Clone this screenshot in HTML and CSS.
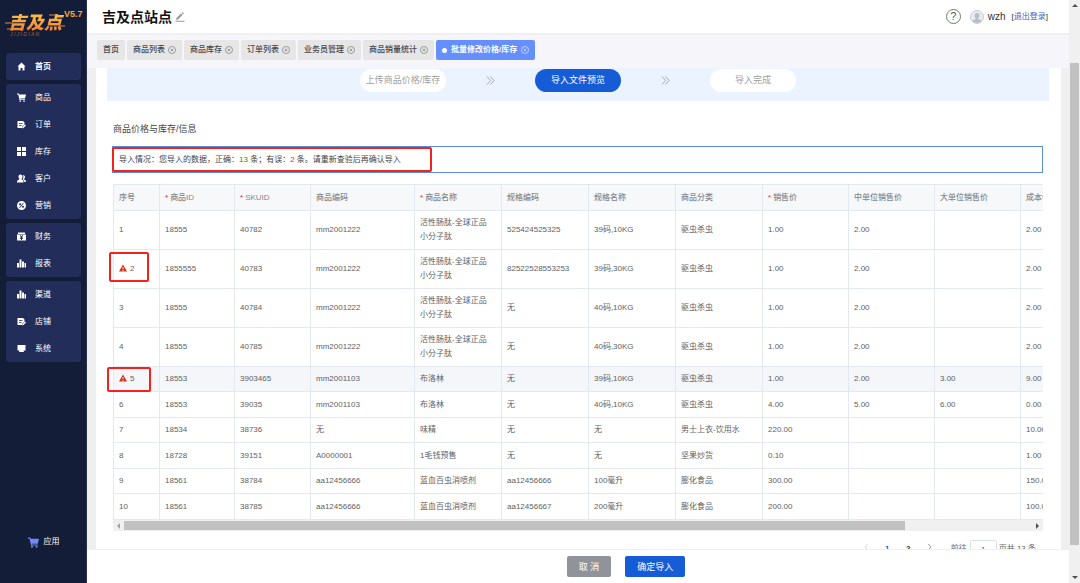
FILE: index.html
```html
<!DOCTYPE html>
<html lang="zh-CN">
<head>
  <meta charset="UTF-8"/>
  <meta name="viewport" content="width=device-width, initial-scale=1.0"/>
  <title>批量修改价格/库存</title>
  <link rel="stylesheet" href="styles.css">
</head>
<body>
<!-- shared icons -->
<svg class="sprite" aria-hidden="true">
  <symbol id="i-home" viewBox="0 0 18 18"><path d="M9 1 1 9h2v8h4v-5h4v5h4V9h2z"/></symbol>
  <symbol id="i-cart" viewBox="0 0 18 18"><path d="M0 1h3.600l.8 2H18l-2 8H6.200l.3 1.400H16V14H5L2.500 3H0z"/><circle cx="6.500" cy="16" r="1.700"/><circle cx="14" cy="16" r="1.700"/></symbol>
  <symbol id="i-order" viewBox="0 0 18 18"><path fill-rule="evenodd" d="M1 2h11l3 3v4l-5 5v2H1zM4 6v1.500h7V6zm0 4v1.500h5V10z"/><path d="m16 9 2 2-5 5-3 1 1-3z"/></symbol>
  <symbol id="i-grid" viewBox="0 0 18 18"><path d="M0 0h8v8H0zM10 0h8v8h-8zM0 10h8v8H0zM10 10h8v8h-8z"/></symbol>
  <symbol id="i-user" viewBox="0 0 18 18"><path d="M7 1c3 0 4 2 4 4.500S10 9 9 10c0 2 4 2 4 5v2H0v-2c0-3 5-3 5-5C4 9 3 8 3 5.500S4 1 7 1z"/><path d="M12 2c3 0 4 2 4 4s-1 3-2 4c0 2 4 2 4 5v1h-3.500c0-3-1.500-4-3-5 1-2 2-6 .5-9z"/></symbol>
  <symbol id="i-sale" viewBox="0 0 18 18"><path fill-rule="evenodd" d="M9 0a9 9 0 1 1 0 18A9 9 0 0 1 9 0zM6 4.500a2 2 0 1 0 0 4 2 2 0 0 0 0-4zM12 4 4.500 13l1.300 1L13.300 5zM12 9.500a2 2 0 1 0 0 4 2 2 0 0 0 0-4z"/></symbol>
  <symbol id="i-money" viewBox="0 0 18 18"><path fill-rule="evenodd" d="M2 1h14v3H2zM0 5h18v12H0zM5.500 6.500 8 9.500H6V11h2v1H6v1.500h2V16h2v-2.500h2V12h-2v-1h2V9.500h-2l2.500-3h-2L9 8.500l-1.500-2z"/></symbol>
  <symbol id="i-chart" viewBox="0 0 18 18"><path d="M0 8h4v9H0zM5 1h4v16H5zM10 5h4v12h-4zM15 8h3v9h-3z"/></symbol>
  <symbol id="i-screen" viewBox="0 0 18 18"><path d="M1 2h16v11H1zM5 13h8l1 3H4z"/></symbol>
  <symbol id="i-close" viewBox="0 0 18 18"><g fill="none" stroke="currentColor" stroke-width="1.500"><circle cx="9" cy="9" r="8"/><path d="m6 6 6 6M12 6l-6 6"/></g></symbol>
  <symbol id="i-next" viewBox="0 0 18 18"><path fill="none" stroke="currentColor" stroke-width="1.800" d="m2 1 7 8-7 8M9 1l7 8-7 8"/></symbol>
  <symbol id="i-warn" viewBox="0 0 18 18"><path fill-rule="evenodd" d="M9 1 18 17H0zM8 7v5h2V7zm0 6.500v2h2v-2z"/></symbol>
</svg>

<aside class="sidebar">
  <div class="logo">
    <span class="logo-name">吉及点</span>
    <svg class="logo-lines" viewBox="0 0 62 24" aria-hidden="true"><path d="M0 10h8M54 13h6M2 16h5M44 2h8" stroke="#e58a35" stroke-width="1"/></svg>
    <span class="logo-sub">J I J I D I A N</span>
    <span class="logo-version">V5.7</span>
  </div>
  <nav class="menu">
    <div class="menu-group">
      <a href="#" class="menu-item active"><svg class="icon"><use href="#i-home"/></svg>首页</a>
    </div>
    <div class="menu-group">
      <a href="#" class="menu-item"><svg class="icon"><use href="#i-cart"/></svg>商品</a>
      <a href="#" class="menu-item"><svg class="icon"><use href="#i-order"/></svg>订单</a>
      <a href="#" class="menu-item"><svg class="icon"><use href="#i-grid"/></svg>库存</a>
      <a href="#" class="menu-item"><svg class="icon"><use href="#i-user"/></svg>客户</a>
      <a href="#" class="menu-item"><svg class="icon"><use href="#i-sale"/></svg>营销</a>
    </div>
    <div class="menu-group">
      <a href="#" class="menu-item"><svg class="icon"><use href="#i-money"/></svg>财务</a>
      <a href="#" class="menu-item"><svg class="icon"><use href="#i-chart"/></svg>报表</a>
    </div>
    <div class="menu-group">
      <a href="#" class="menu-item"><svg class="icon"><use href="#i-chart"/></svg>渠道</a>
      <a href="#" class="menu-item"><svg class="icon"><use href="#i-order"/></svg>店铺</a>
      <a href="#" class="menu-item"><svg class="icon"><use href="#i-screen"/></svg>系统</a>
    </div>
  </nav>
  <a href="#" class="apps"><svg class="icon"><use href="#i-cart"/></svg>应用</a>
</aside>

<div class="page">
  <header class="topbar">
    <h1 class="site-title">吉及点站点</h1>
    <button class="edit-btn" aria-label="编辑">
      <svg viewBox="0 0 20 20"><path d="M1 18.500h18" stroke="#999" stroke-width="2"/><path d="m3 12 9-9 3 3-9 9-4 1zM13 2l1-1q1-1 2 0l1 1q1 1 0 2l-1 1z" fill="#999"/></svg>
    </button>
    <div class="user-box">
      <button class="help-btn" aria-label="帮助">?</button>
      <svg class="avatar" viewBox="0 0 28 28"><circle cx="14" cy="14" r="13" fill="#e9ebf1" stroke="#b9bdc9" stroke-width="1.500"/><path d="M14 6c4 0 5 2.500 5 5.500S17 16 16 17c0 2 6 2 7 5a12 12 0 0 1-18 0c1-3 7-3 7-5-1-1-3-2.500-3-5.500S10 6 14 6z" fill="#b9bdc9"/></svg>
      <span class="user-name">wzh</span>
      <span class="logout">[<a href="#">退出登录</a>]</span>
    </div>
  </header>

  <nav class="tabs">
    <a href="#" class="tab">首页</a>
    <a href="#" class="tab">商品列表<svg class="icon"><use href="#i-close"/></svg></a>
    <a href="#" class="tab">商品库存<svg class="icon"><use href="#i-close"/></svg></a>
    <a href="#" class="tab">订单列表<svg class="icon"><use href="#i-close"/></svg></a>
    <a href="#" class="tab">业务员管理<svg class="icon"><use href="#i-close"/></svg></a>
    <a href="#" class="tab">商品销量统计<svg class="icon"><use href="#i-close"/></svg></a>
    <a href="#" class="tab current"><i class="dot"></i>批量修改价格/库存<svg class="icon"><use href="#i-close"/></svg></a>
  </nav>

  <main class="content">
    <div class="card">
      <div class="steps">
        <span class="step">上传商品价格/库存</span>
        <svg class="icon"><use href="#i-next"/></svg>
        <span class="step current">导入文件预览</span>
        <svg class="icon"><use href="#i-next"/></svg>
        <span class="step">导入完成</span>
      </div>

      <section class="preview">
        <h2 class="section-title">商品价格与库存/信息</h2>
        <div class="result">
          导入情况：您导入的数据，正确：<span class="ok">13</span> 条；有误：<span class="bad">2</span> 条。请重新查验后再确认导入
          <i class="mark mark-result"></i>
        </div>

        <div class="table-wrap">
          <div class="table-scroll">
            <table class="goods">
              <colgroup>
                <col class="c-no"><col class="c-id"><col class="c-sku"><col class="c-code">
                <col class="c-text"><col class="c-text"><col class="c-text"><col class="c-text">
                <col class="c-price"><col class="c-price"><col class="c-price"><col class="c-price">
              </colgroup>
              <thead>
                <tr><th>序号</th><th class="req">商品ID</th><th class="req">SKUID</th><th>商品编码</th><th class="req">商品名称</th><th>规格编码</th><th>规格名称</th><th>商品分类</th><th class="req">销售价</th><th>中单位销售价</th><th>大单位销售价</th><th>成本价</th></tr>
              </thead>
              <tbody>
                <tr class="tall"><td>1</td><td>18555</td><td>40782</td><td>mm2001222</td><td>活性肠肽-全球正品小分子肽</td><td>525424525325</td><td>39码,10KG</td><td>驱虫杀虫</td><td>1.00</td><td>2.00</td><td></td><td>2.00</td></tr>
                <tr class="tall"><td><svg class="warn"><use href="#i-warn"/></svg>2</td><td>1855555</td><td>40783</td><td>mm2001222</td><td>活性肠肽-全球正品小分子肽</td><td>82522528553253</td><td>39码,30KG</td><td>驱虫杀虫</td><td>1.00</td><td>2.00</td><td></td><td>2.00</td></tr>
                <tr class="tall"><td>3</td><td>18555</td><td>40784</td><td>mm2001222</td><td>活性肠肽-全球正品小分子肽</td><td>无</td><td>40码,10KG</td><td>驱虫杀虫</td><td>1.00</td><td>2.00</td><td></td><td>2.00</td></tr>
                <tr class="tall"><td>4</td><td>18555</td><td>40785</td><td>mm2001222</td><td>活性肠肽-全球正品小分子肽</td><td>无</td><td>40码,30KG</td><td>驱虫杀虫</td><td>1.00</td><td>2.00</td><td></td><td>2.00</td></tr>
                <tr class="hover"><td><svg class="warn"><use href="#i-warn"/></svg>5</td><td>18553</td><td>3903465</td><td>mm2001103</td><td>布洛林</td><td>无</td><td>39码,10KG</td><td>驱虫杀虫</td><td>1.00</td><td>2.00</td><td>3.00</td><td>9.00</td></tr>
                <tr><td>6</td><td>18553</td><td>39035</td><td>mm2001103</td><td>布洛林</td><td>无</td><td>40码,10KG</td><td>驱虫杀虫</td><td>4.00</td><td>5.00</td><td>6.00</td><td>0.00</td></tr>
                <tr><td>7</td><td>18534</td><td>38736</td><td>无</td><td>味精</td><td>无</td><td>无</td><td>男士上衣-饮用水</td><td>220.00</td><td></td><td></td><td>10.00</td></tr>
                <tr><td>8</td><td>18728</td><td>39151</td><td>A0000001</td><td>1毛钱预售</td><td>无</td><td>无</td><td>坚果炒货</td><td>0.10</td><td></td><td></td><td>1.00</td></tr>
                <tr><td>9</td><td>18561</td><td>38784</td><td>aa12456666</td><td>蓝血百虫消喷剂</td><td>aa12456666</td><td>100毫升</td><td>膨化食品</td><td>300.00</td><td></td><td></td><td>150.00</td></tr>
                <tr><td>10</td><td>18561</td><td>38785</td><td>aa12456666</td><td>蓝血百虫消喷剂</td><td>aa12456667</td><td>200毫升</td><td>膨化食品</td><td>200.00</td><td></td><td></td><td>100.00</td></tr>
              </tbody>
            </table>
          </div>
          <div class="hbar" aria-hidden="true"><i class="arrow left"></i><i class="hbar-track"><i class="hbar-thumb"></i></i><i class="arrow right"></i></div>
          <i class="mark mark-row2"></i>
          <i class="mark mark-row5"></i>
        </div>

        <div class="pager">
          <button class="page-btn" aria-label="上一页"><svg class="prev" viewBox="0 0 8 12"><path d="M6 1 2 6l4 5"/></svg></button>
          <button class="page-btn current">1</button>
          <button class="page-btn">2</button>
          <button class="page-btn" aria-label="下一页"><svg viewBox="0 0 8 12"><path d="m2 1 4 5-4 5"/></svg></button>
          <label for="pageNo">前往</label>
          <input id="pageNo" type="text" value="1">
          <span>页共 13 条</span>
        </div>
      </section>
    </div>
  </main>

  <footer class="actions">
    <button class="btn">取 消</button>
    <button class="btn primary">确定导入</button>
  </footer>
</div>

<div class="vbar" aria-hidden="true"><i class="arrow up"></i><i class="vbar-track"><i class="vbar-thumb"></i></i><i class="arrow down"></i></div>
</body>
</html>
```
FILE: styles.css
```css
* {
  box-sizing: border-box;
}
body {
  margin: 0;
  height: 100vh;
  display: flex;
  overflow: hidden;
  font-family: "Liberation Sans", "Noto Sans CJK SC", sans-serif;
  font-size: 8px;
  line-height: 14px;
  color: #606266;
  background-color: #fff;
}
a {
  color: inherit;
  text-decoration: none;
}
button,
input {
  font: inherit;
  color: inherit;
  border: none;
  background: none;
  padding: 0;
}
button {
  cursor: pointer;
}
.sprite {
  position: absolute;
  width: 0;
  height: 0;
}
.icon {
  width: 9px;
  height: 9px;
  fill: currentColor;
  flex: none;
}

/* sidebar */
.sidebar {
  width: 87px;
  flex: none;
  display: flex;
  flex-direction: column;
  padding: 0 5px 34px 6px;
  background-color: #141d38;
  border-right: 1px solid #2b3350;
  color: #fff;
}
.logo {
  position: relative;
  height: 53px;
  padding: 14px 0 0 2px;
}
.logo-name {
  display: block;
  font-size: 18px;
  line-height: 18px;
  font-weight: 900;
  font-style: italic;
  background: linear-gradient(#ffc247, #f07a35);
  -webkit-background-clip: text;
  background-clip: text;
  color: transparent;
}
.logo-lines {
  position: absolute;
  left: -1px;
  top: 13px;
  width: 62px;
  height: 24px;
}
.logo-sub {
  position: absolute;
  left: 4px;
  top: 32px;
  font-size: 5px;
  line-height: 5px;
  white-space: nowrap;
  font-style: italic;
  color: #a5603a;
}
.logo-version {
  position: absolute;
  left: 58px;
  top: 7px;
  font-size: 9px;
  font-weight: bold;
  color: #f9a825;
}
.menu {
  display: flex;
  flex-direction: column;
  gap: 4px;
}
.menu-group {
  background-color: #222d5a;
  border-radius: 3px;
}
.menu-item {
  display: flex;
  align-items: center;
  gap: 9px;
  height: 27px;
  padding-left: 11px;
}
.menu-item.active {
  font-weight: bold;
}
.apps {
  display: flex;
  align-items: center;
  justify-content: center;
  gap: 5px;
  margin-top: auto;
}
.apps .icon {
  width: 11px;
  height: 11px;
  fill: #7189f5;
}

/* header */
.page {
  flex: 1;
  min-width: 0;
  display: flex;
  flex-direction: column;
}
.topbar {
  display: flex;
  align-items: center;
  height: 35px;
  flex: none;
  padding: 0 21px 0 15px;
  border-bottom: 2px solid #efeff1;
}
.site-title {
  margin: 0;
  font-size: 14px;
  line-height: 20px;
  font-weight: bold;
  color: #111;
}
.edit-btn {
  margin-left: 3px;
  height: 10px;
}
.edit-btn svg {
  display: block;
  width: 10px;
  height: 10px;
}
.user-box {
  display: flex;
  align-items: center;
  margin-left: auto;
  color: #333;
}
.help-btn {
  width: 15px;
  height: 15px;
  border: 1px solid #777;
  border-radius: 50%;
  font-size: 11px;
  line-height: 13px;
  color: #555;
}
.avatar {
  width: 14px;
  height: 14px;
  margin: 0 4px 0 9px;
}
.user-name {
  font-size: 10px;
}
.logout {
  margin-left: 6px;
}
.logout a {
  color: #4661c4;
}

/* opened tabs */
.tabs {
  display: flex;
  gap: 2px;
  flex: none;
  padding: 5px 10px 8px;
  background-color: #f5f5fa;
}
.tab {
  display: flex;
  align-items: center;
  gap: 3px;
  height: 20px;
  padding: 0 6px;
  border-radius: 2px;
  background-color: #e6e6e6;
  font-weight: 500;
  color: #43474f;
  white-space: nowrap;
}
.tab .icon {
  width: 8px;
  height: 8px;
  color: #777b82;
}
.tab.current {
  gap: 4px;
  background-color: #658ffc;
  color: #fff;
  font-weight: bold;
}
.tab.current .icon {
  color: #e4ebff;
}
.dot {
  width: 5px;
  height: 5px;
  border-radius: 50%;
  background-color: #fff;
}

/* content */
.content {
  flex: 1;
  min-height: 0;
  overflow: hidden;
  padding: 0 8px 0 9px;
  background-color: #efefef;
}
.card {
  background-color: #fff;
}
.steps {
  display: flex;
  align-items: center;
  justify-content: center;
  gap: 40px;
  margin: 0 12px 0 11px;
  padding: 1px 0 9px;
  background-color: #eaf3ff;
  color: #a0a0a0;
}
.step {
  width: 86px;
  border-radius: 12px;
  background-color: #fff;
  font-size: 9px;
  line-height: 23px;
  text-align: center;
  white-space: nowrap;
}
.step.current {
  background-color: #165cd6;
  color: #fff;
}
.preview {
  padding: 21px 18px 20px 17px;
}
.section-title {
  margin: 0 0 10px;
  font-size: 9px;
  line-height: 14px;
  font-weight: normal;
  color: #444;
}
.result {
  position: relative;
  height: 27px;
  margin-left: -1px;
  padding: 0 6px;
  border: 1px solid #5b8bdc;
  line-height: 25px;
  color: #444;
}
.ok {
  color: #1f8f1f;
}
.bad {
  color: #f5222d;
}

/* red frames over the wrong rows */
.mark {
  position: absolute;
  border: 2px solid #f5221b;
  border-radius: 2px;
}
.mark-result {
  left: -1px;
  top: 0;
  width: 320px;
  height: 25px;
}
.mark-row2 {
  left: -4px;
  top: 68px;
  width: 40px;
  height: 30px;
}
.mark-row5 {
  left: -6px;
  top: 183px;
  width: 44px;
  height: 25px;
}

/* table */
.table-wrap {
  position: relative;
  margin-top: 11px;
}
.table-scroll {
  overflow: hidden;
}
.goods {
  width: 994px;
  table-layout: fixed;
  border-collapse: separate;
  border-spacing: 0;
}
.c-no {
  width: 47px;
}
.c-id {
  width: 75px;
}
.c-sku {
  width: 76px;
}
.c-code {
  width: 104px;
}
.c-text {
  width: 87px;
}
.c-price {
  width: 86px;
}
.goods th,
.goods td {
  height: 25px;
  padding: 0 8px 0 5px;
  border-right: 1px solid #e4e9f1;
  border-bottom: 1px solid #e4e9f1;
  text-align: left;
}
.goods th:first-child,
.goods td:first-child {
  border-left: 1px solid #e4e9f1;
}
.goods th {
  height: 27px;
  border-top: 1px solid #e4e9f1;
  background-color: #f6f8fa;
  font-weight: 500;
  color: #85888e;
}
.goods tr:nth-child(even) td {
  height: 26px;
}
.goods tr.tall td {
  height: 39px;
}
.goods .hover td {
  background-color: #f4f6fa;
}
.req::before {
  content: "*";
  margin-right: 2px;
  color: #f5222d;
}
.warn {
  width: 8px;
  height: 8px;
  margin-right: 3px;
  fill: #dc2b14;
  vertical-align: -1px;
}

/* scrollbars */
.hbar {
  display: flex;
  align-items: center;
  gap: 4px;
  height: 11px;
  padding: 0 4px;
  background-color: #f0f0f0;
}
.hbar-track {
  flex: 1;
}
.hbar-thumb {
  display: block;
  width: 86%;
  height: 9px;
  background-color: #c1c1c1;
}
.vbar {
  display: flex;
  flex-direction: column;
  align-items: center;
  width: 11px;
  flex: none;
  padding: 4px 0;
  background-color: #f0f0f0;
}
.vbar-track {
  flex: 1;
  width: 9px;
  padding-top: 56px;
}
.vbar-thumb {
  display: block;
  height: 94%;
  background-color: #c1c1c1;
}
.arrow {
  border: 3px solid transparent;
}
.arrow.up {
  border-top: 0;
  border-bottom-color: #505050;
}
.arrow.down {
  border-bottom: 0;
  border-top-color: #505050;
}
.arrow.left {
  border-left: 0;
  border-right-color: #a3a3a3;
}
.arrow.right {
  border-right: 0;
  border-left-color: #505050;
}

/* pager */
.pager {
  display: flex;
  align-items: center;
  justify-content: flex-end;
  margin-top: 9px;
  padding-right: 7px;
}
.page-btn {
  width: 21px;
  height: 18px;
  font-weight: bold;
  color: #303133;
}
.page-btn.current {
  color: #165cd6;
}
.page-btn svg {
  width: 5px;
  height: 8px;
  fill: none;
  stroke: #606266;
}
.page-btn .prev {
  stroke: #b5b8be;
}
.pager label {
  margin-left: 11px;
}
.pager input {
  width: 27px;
  height: 18px;
  margin: 0 2px 0 3px;
  border: 1px solid #dcdfe6;
  border-radius: 2px;
  text-align: center;
}

/* bottom buttons */
.actions {
  display: flex;
  justify-content: center;
  gap: 14px;
  flex: none;
  padding: 6px 0 6px 96px;
  border-top: 1px solid #f0f0f0;
  background-color: #fff;
}
.btn {
  height: 21px;
  padding: 0 12px;
  border-radius: 2px;
  background-color: #909399;
  font-size: 9px;
  color: #fff;
}
.btn.primary {
  background-color: #165cd6;
}
```
